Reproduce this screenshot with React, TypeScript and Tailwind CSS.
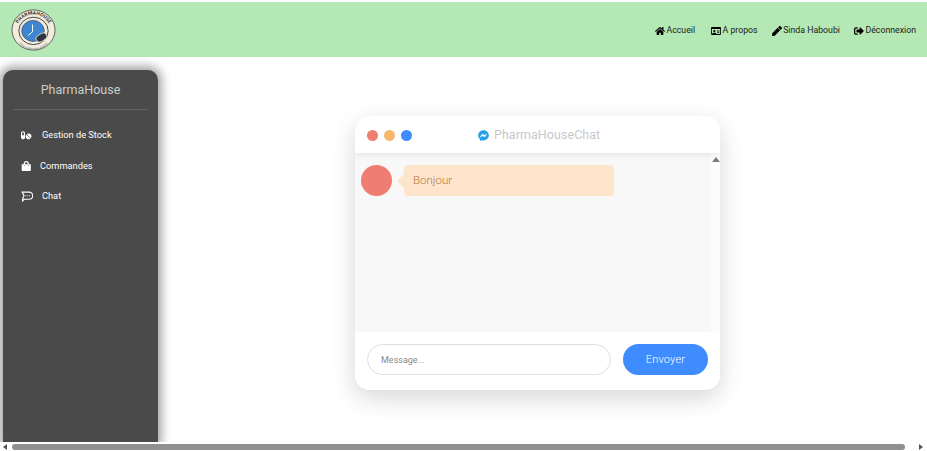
import { FaHome, FaRegIdCard, FaPen, FaSignOutAlt, FaPills, FaShoppingBag, FaFacebookMessenger } from "react-icons/fa";

function Logo() {
  return (
    <svg width="45" height="42" viewBox="0 0 46 46" preserveAspectRatio="none" className="shrink-0">
      <defs>
        <path id="arcTop" d="M6 23a17 17 0 0 1 34 0" />
        <path id="arcBottom" d="M3.5 25a19.5 19.5 0 0 0 39 0" />
      </defs>
      <circle cx="23" cy="23" r="22" fill="#f1ecdc" stroke="#3a3a3a" strokeWidth="0.8" />
      <text fontFamily="Roboto, sans-serif" fontSize="5.2" fontWeight="700" fill="#333"><textPath href="#arcTop" startOffset="50%" textAnchor="middle">PHARMAHOUSE</textPath></text>
      <text fontFamily="Roboto, sans-serif" fontSize="3" fill="#666"><textPath href="#arcBottom" startOffset="50%" textAnchor="middle">votre santé notre priorité</textPath></text>
      <circle cx="23" cy="24" r="15" fill="#f1ecdc" stroke="#2a2a2a" strokeWidth="0.9" />
      <circle cx="22.5" cy="24" r="11.5" fill="#3f86d2" stroke="#34495c" strokeWidth="0.7" />
      <path d="M22 17v8l-4.5 4" fill="none" stroke="#fff" strokeWidth="1" />
      <g transform="rotate(-35 31 31)">
        <rect x="25" y="27.5" width="12" height="7.5" rx="3.7" fill="#2d3640" stroke="#f1ecdc" strokeWidth="0.8" />
      </g>
    </svg>
  );
}

function NavLink({ icon, label }: { icon: React.ReactNode; label: string }) {
  return (
    <a className="flex items-center gap-[1.5px] text-[8.75px] leading-none text-[#1c1c1c]">
      <span className="text-[10px] text-black">{icon}</span>
      {label}
    </a>
  );
}

function SideItem({ icon, label, gap }: { icon: React.ReactNode; label: string; gap: string }) {
  return (
    <div className={`flex h-[30.5px] items-center pl-[18px] text-[9.25px] text-white ${gap}`}>
      <span className="flex w-[11px] justify-center text-[10.5px]">{icon}</span>
      {label}
    </div>
  );
}

function ChatGlyph() {
  return (
    <svg width="12" height="11" viewBox="0 0 11 10" fill="none" stroke="#fff" strokeWidth="1.05" className="shrink-0">
      <path d="M1 1h6.5a3 3 0 0 1 0 6.5H3L1.5 9V7L2.8 4.2 1 1z" />
      <circle cx="4.5" cy="4.3" r="0.55" fill="#fff" stroke="none" />
      <circle cx="6.2" cy="4.3" r="0.55" fill="#fff" stroke="none" />
      <circle cx="7.9" cy="4.3" r="0.55" fill="#fff" stroke="none" />
    </svg>
  );
}

export default function App() {
  return (
    <div className="flex h-[451px] w-[927px] flex-col overflow-hidden bg-white pt-[2px] font-['Roboto',sans-serif]">
      <header className="flex h-[55px] shrink-0 items-center justify-between bg-[#b4e8b4] pl-[11px] pr-[11px]">
        <Logo />
        <nav className="flex items-center gap-[14px] pt-[2px]">
          <div className="mr-[2px]">
            <NavLink icon={<FaHome />} label="Accueil" />
          </div>
          <NavLink icon={<FaRegIdCard />} label="A propos" />
          <NavLink icon={<FaPen />} label="Sinda Haboubi" />
          <NavLink icon={<FaSignOutAlt />} label="Déconnexion" />
        </nav>
      </header>

      <div className="flex min-h-0 flex-1 pt-[13px]">
        <aside className="ml-[3px] flex w-[155px] shrink-0 flex-col rounded-t-[10px] bg-[#4a4a4a] px-[10px] shadow-[0_0_10px_4px_rgba(0,0,0,0.35)]">
          <div className="flex h-[40px] items-center justify-center border-b border-[#636363] pt-[1px] text-[12.5px] text-[#c9cec9]">
            PharmaHouse
          </div>
          <div className="-mx-[10px] pt-[10px]">
            <SideItem icon={<FaPills />} label="Gestion de Stock" gap="gap-[10px]" />
            <SideItem icon={<FaShoppingBag />} label="Commandes" gap="gap-[8px]" />
            <SideItem icon={<ChatGlyph />} label="Chat" gap="gap-[10px]" />
          </div>
        </aside>

        <main className="flex flex-1 justify-center pl-[197px] pr-[207px] pt-[46px]">
          <section className="flex h-[274px] w-[365px] shrink-0 flex-col overflow-hidden rounded-[15px] bg-white shadow-[0_8px_24px_rgba(0,0,0,0.16)]">
            <div className="relative z-10 flex h-[37px] shrink-0 items-center bg-white pl-[12px] pt-[2px] shadow-[0_2px_6px_rgba(0,0,0,0.08)]">
              <div className="flex gap-[6px]">
                <span className="h-[11px] w-[11px] rounded-full bg-[#ee7e72]" />
                <span className="h-[11px] w-[11px] rounded-full bg-[#f6b96b]" />
                <span className="h-[11px] w-[11px] rounded-full bg-[#3f8cff]" />
              </div>
              <div className="ml-[66px] flex items-center gap-[5px] text-[12.5px] tracking-[0.05px] text-[#c8c8cc]">
                <FaFacebookMessenger className="text-[11px] text-[#2b9fe8]" />
                PharmaHouseChat
              </div>
            </div>
            <div className="flex min-h-0 flex-1">
              <div className="flex flex-1 items-start gap-[11.5px] bg-[#f8f8f8] pl-[6px] pt-[12px]">
                <span className="h-[31px] w-[31px] shrink-0 rounded-full bg-[#ee7e72]" />
                <div className="relative ml-[0.5px] flex h-[30.5px] w-[209.5px] items-center rounded-[4px] bg-[#fde4cb] pl-[9px] text-[11.5px] font-light text-[#b47b3c]">
                  <span className="absolute -left-[7px] top-[9px] h-0 w-0 border-y-[7px] border-r-[7px] border-y-transparent border-r-[#fde4cb]" />
                  Bonjour
                </div>
              </div>
              <div className="flex w-[9px] shrink-0 justify-center bg-[#fcfcfc] pt-[4px]">
                <span className="h-0 w-0 border-x-[4px] border-b-[5px] border-x-transparent border-b-[#7d7d7d]" />
              </div>
            </div>
            <div className="flex h-[58px] shrink-0 items-start gap-[12px] bg-white pl-[12px] pt-[12px]">
              <div className="flex h-[31px] w-[244px] items-center rounded-full border border-[#dedede] pl-[13px] pt-[2px] text-[9px] text-[#8a8a8a]">
                Message...
              </div>
              <button className="flex h-[31px] w-[85px] items-center justify-center rounded-full bg-[#3f8cff] pt-[2px] text-[11px] font-light tracking-[0.2px] text-white">
                Envoyer
              </button>
            </div>
          </section>
        </main>
      </div>

      <div className="flex h-[9px] shrink-0 items-center bg-white">
        <span className="ml-[3px] h-0 w-0 border-y-[3.5px] border-r-[4px] border-y-transparent border-r-[#555]" />
        <span className="ml-[5px] h-[6px] w-[893px] rounded-full bg-[#909090]" />
        <span className="ml-[14px] h-0 w-0 border-y-[3.5px] border-l-[4px] border-y-transparent border-l-[#555]" />
      </div>
    </div>
  );
}
